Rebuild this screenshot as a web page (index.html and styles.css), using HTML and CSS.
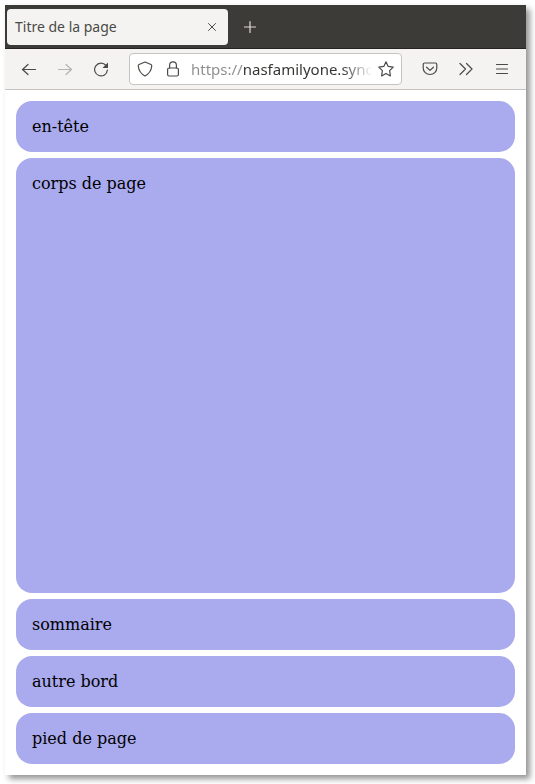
FILE: index.html
```html
<!DOCTYPE html>
<html lang="fr">
<head>
  <meta charset="utf-8">
  <title>Titre de la page</title>
  <link rel="stylesheet" href="styles.css">
</head>
<body>

  <div class="window">
    <div class="tabs">
      <div class="tab">
        <span class="tab-title">Titre de la page</span>
        <button class="tab-close" aria-label="Fermer l'onglet">
          <svg width="16" height="16" viewBox="0 0 16 16"><path d="M4.500 4.500l7 7M11.500 4.500l-7 7"/></svg>
        </button>
      </div>
      <button class="new-tab" aria-label="Nouvel onglet">
        <svg width="16" height="16" viewBox="0 0 16 16"><path d="M8 2.500v11M2.500 8h11"/></svg>
      </button>
    </div>

    <div class="toolbar">
      <button class="tool" aria-label="Page précédente">
        <svg width="16" height="16" viewBox="0 0 16 16"><path d="M14.500 8.500H2M7 3.500L1.500 8.500L7 13.500"/></svg>
      </button>
      <button class="tool" aria-label="Page suivante" disabled>
        <svg width="16" height="16" viewBox="0 0 16 16"><path d="M1.500 8.500H14M9 3.500L14.500 8.500L9 13.500"/></svg>
      </button>
      <button class="tool" aria-label="Actualiser">
        <svg width="16" height="16" viewBox="0 0 16 16"><path d="M13 4.500A6.400 6.400 0 1 0 14.400 9"/><path class="solid" d="M15 1.500v5.500H9.500z"/></svg>
      </button>

      <div class="urlbar">
        <button class="url-button" aria-label="Protection">
          <svg width="16" height="16" viewBox="0 0 16 16"><path d="M8 1L14 3.500Q15 4 14.700 5.500Q13.800 12 8 15Q2.200 12 1.300 5.500Q1 4 2 3.500Z"/></svg>
        </button>
        <button class="url-button" aria-label="Connexion sécurisée">
          <svg width="16" height="16" viewBox="0 0 16 16"><rect x="2.600" y="7" width="10.800" height="8" rx="1.500"/><path d="M4.600 7V4.200a3.400 3.400 0 0 1 6.800 0V7"/></svg>
        </button>
        <input class="url" type="text" aria-label="Adresse" value="https://nasfamilyone.synology.me">
        <button class="url-button" aria-label="Ajouter un marque-page">
          <svg width="16" height="16" viewBox="0 0 16 16"><path d="M8 .8L10.200 5.400L15.200 6.100L11.600 9.700L12.400 14.900L8 12.400L3.600 14.900L4.400 9.700L.8 6.100L5.800 5.400Z"/></svg>
        </button>
      </div>

      <button class="tool" aria-label="Pocket">
        <svg width="16" height="16" viewBox="0 0 16 16"><path d="M2.700 2h10.600a1.500 1.500 0 0 1 1.500 1.500V7a6.800 6.500 0 0 1-13.600 0V3.500A1.500 1.500 0 0 1 2.700 2zM4.600 6.200L8 9.400l3.400-3.200"/></svg>
      </button>
      <button class="tool" aria-label="Plus d'outils">
        <svg width="16" height="16" viewBox="0 0 16 16"><path d="M2 2.500L7.500 8L2 13.500M8.500 2.500L14 8L8.500 13.500"/></svg>
      </button>
      <button class="tool" aria-label="Menu">
        <svg width="16" height="16" viewBox="0 0 16 16"><path d="M2.500 3.500h11M2.500 8h11M2.500 12.500h11"/></svg>
      </button>
    </div>

    <div class="page">
      <header class="block">en-tête</header>
      <main class="block content">corps de page</main>
      <nav class="block">sommaire</nav>
      <aside class="block">autre bord</aside>
      <footer class="block">pied de page</footer>
    </div>
  </div>

</body>
</html>
```
FILE: styles.css
```css
* {
  box-sizing: border-box;
}

body {
  margin: 0;
  padding: 5px 9px 9px 5px;
  min-height: 100vh;
  display: flex;
  background: #fff;
}

.window {
  flex: 1;
  min-width: 0;
  display: flex;
  flex-direction: column;
  background: #fff;
  box-shadow: 4px 4px 6px rgba(0, 0, 0, 0.42);
}

button {
  display: flex;
  align-items: center;
  justify-content: center;
  padding: 0;
  border: none;
  background: none;
  color: #4a4a47;
}

svg {
  fill: none;
  stroke: currentColor;
  stroke-width: 1.2;
  stroke-linecap: round;
  stroke-linejoin: round;
}

.solid {
  fill: currentColor;
  stroke: none;
}

.tabs {
  display: flex;
  align-items: center;
  height: 44px;
  padding: 0 2px;
  background: #3c3b37;
  border-bottom: 1px solid #272324;
}

.tab {
  display: flex;
  align-items: center;
  justify-content: space-between;
  width: 221px;
  height: 36px;
  padding: 0 8px;
  background: #f4f3f2;
  border-radius: 4px;
  color: #4a4a47;
}

.tab-title {
  font-family: "Noto Sans", sans-serif;
  font-size: 14px;
}

.tab-close svg {
  stroke-width: 1;
}

.new-tab {
  width: 44px;
  height: 36px;
  color: #dfdbd2;
}

.toolbar {
  display: flex;
  align-items: center;
  height: 41px;
  padding: 0 6px;
  background: #f4f3f2;
  border-bottom: 1px solid #c6c3c0;
}

.tool {
  flex: none;
  width: 36px;
  height: 32px;
}

.tool:disabled {
  color: #b4b3b1;
}

.urlbar {
  flex: 1;
  min-width: 0;
  display: flex;
  align-items: center;
  height: 32px;
  margin: 0 10px;
  padding: 0 1px;
  background: #fff;
  border: 1px solid #c6c3c0;
  border-radius: 4px;
}

.url-button {
  flex: none;
  width: 28px;
  height: 28px;
}

/* grey scheme, dark host, fading out before the star */
.url {
  flex: 1;
  min-width: 0;
  margin-left: 4px;
  padding: 0;
  border: none;
  outline: none;
  font-family: "Noto Sans", sans-serif;
  font-size: 15px;
  color: transparent;
  background: linear-gradient(to right, #8c8c8a 53px, #333331 53px, #333331 calc(100% - 30px), transparent);
  -webkit-background-clip: text;
  background-clip: text;
}

.page {
  flex: 1;
  display: flex;
  flex-direction: column;
  gap: 6px;
  padding: 11px;
  font-family: "DejaVu Serif", serif;
  font-size: 16px;
  line-height: 19px;
  color: #000;
}

.block {
  padding: 16px;
  background: #aaaaee;
  border-radius: 16px;
}

.content {
  flex: 1;
}
```
